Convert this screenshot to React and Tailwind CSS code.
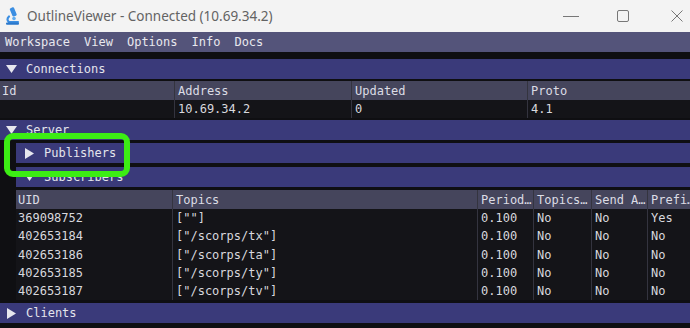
import React from "react";

const mono = { fontFamily: '"DejaVu Sans Mono", "Liberation Mono", monospace' };

function TriDown() {
  return (
    <svg width="11" height="10" viewBox="0 0 11 10" className="shrink-0">
      <polygon points="0,1 11,1 5.5,9" fill="#e6e6ee" />
    </svg>
  );
}

function TriRight() {
  return (
    <svg width="10" height="11" viewBox="0 0 10 11" className="shrink-0">
      <polygon points="1,0 10,5.5 1,11" fill="#e6e6ee" />
    </svg>
  );
}

function Header({ label, open, indent }) {
  return (
    <div className={`flex items-center h-[20px] bg-[#3a3a7a] text-[#e4e4ec] ${indent ? "ml-[16px] pl-[8px]" : "pl-[6px]"}`}>
      {open ? <TriDown /> : <TriRight />}
      <span className={open ? "ml-[9px]" : "ml-[10px]"}>{label}</span>
    </div>
  );
}

function Row({ cells, widths, head }) {
  return (
    <div className={`flex items-center whitespace-nowrap ${head ? "h-[19px] bg-[#45455c] text-[#dcdce4]" : "h-[18.2px] bg-[#141418] text-[#d8d8de]"}`}>
      {cells.map((c, i) => (
        <div
          key={i}
          className={`h-full flex items-center overflow-hidden ${i === 0 ? "pl-[2px]" : "pl-[3px] border-l border-[#34343f]"} ${i === cells.length - 1 ? "flex-1 min-w-0" : "shrink-0"}`}
          style={i === cells.length - 1 ? undefined : { width: widths[i] }}
        >
          {c}
        </div>
      ))}
    </div>
  );
}

const connWidths = [174, 177, 176];
const subWidths = [156, 305, 56, 58, 56];

const subs = [
  ["369098752", '[""]', "0.100", "No", "No", "Yes"],
  ["402653184", '["/scorps/tx"]', "0.100", "No", "No", "No"],
  ["402653186", '["/scorps/ta"]', "0.100", "No", "No", "No"],
  ["402653185", '["/scorps/ty"]', "0.100", "No", "No", "No"],
  ["402653187", '["/scorps/tv"]', "0.100", "No", "No", "No"],
];

export default function App() {
  return (
    <div className="w-[690px] h-[328px] overflow-hidden bg-[#0f0f12] flex flex-col">
      {/* title bar */}
      <div className="h-[32px] bg-[#f3f3f3] flex items-center shrink-0">
        {/* microscope icon */}
        <svg width="17" height="18" viewBox="0 0 17 18" className="ml-[4px]">
          <rect x="7" y="0.5" width="4.5" height="9" rx="1.2" fill="#3b8ee2" transform="rotate(-22 9 5)" />
          <path d="M5 9.5 Q2 12.5 5 15" stroke="#3b8ee2" strokeWidth="2.2" fill="none" strokeLinecap="round" />
          <path d="M5 15 L14 15" stroke="#3b8ee2" strokeWidth="2.2" strokeLinecap="round" />
          <rect x="2" y="15.5" width="13" height="2.3" rx="1" fill="#2a78cc" />
          <circle cx="10" cy="11.5" r="1.8" fill="#62adf0" />
        </svg>
        <span className="ml-[6px] text-[13.5px] text-[#636363]" style={{ fontFamily: '"Noto Sans", "Open Sans", sans-serif' }}>
          OutlineViewer - Connected (10.69.34.2)
        </span>
        <div className="ml-auto flex items-center h-full">
          <div className="w-[16px] h-px bg-[#777] mr-[38px]" />
          <div className="w-[12px] h-[12px] border border-[#777] rounded-[2px] mr-[42px]" />
          <svg width="12" height="12" viewBox="0 0 12 12" className="mr-[7px]">
            <path d="M0.5 0.5 L11.5 11.5 M11.5 0.5 L0.5 11.5" stroke="#777" strokeWidth="1" />
          </svg>
        </div>
      </div>

      <div className="relative flex flex-col text-[12px] leading-none" style={mono}>
        {/* menu bar */}
        <div className="h-[20px] bg-[#54547a] flex items-center gap-[14px] pl-[5px] text-[#e8e8ee]">
          <span>Workspace</span>
          <span>View</span>
          <span>Options</span>
          <span>Info</span>
          <span>Docs</span>
        </div>
        <div className="h-[7px]" />

        <Header label="Connections" open />
        <div className="h-[2px]" />
        <Row head widths={connWidths} cells={["Id", "Address", "Updated", "Proto"]} />
        <Row widths={connWidths} cells={["", "10.69.34.2", "0", "4.1"]} />
        <div className="h-[2px]" />

        <Header label="Server" open />
        <div className="h-[3px]" />
        <Header label="Publishers" indent />
        <div className="h-[4px]" />
        <Header label="Subscribers" open indent />
        <div className="h-[3px]" />
        <div className="ml-[16px]">
          <Row head widths={subWidths} cells={["UID", "Topics", "Period…", "Topics…", "Send A…", "Prefi…"]} />
          {subs.map((r) => (
            <Row key={r[0]} widths={subWidths} cells={r} />
          ))}
        </div>
        <div className="h-[3px]" />
        <Header label="Clients" />

        {/* highlight marker */}
        <div className="absolute left-[4px] top-[101px] w-[126px] h-[44px] border-[6px] border-[#3ced14] rounded-[9px]" />
      </div>
    </div>
  );
}
